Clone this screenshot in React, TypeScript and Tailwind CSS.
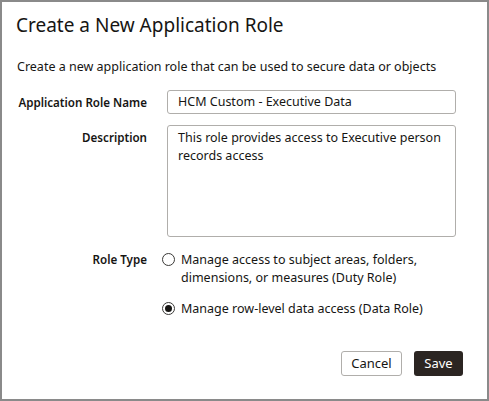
export default function App() {
  return (
    <div className="w-[489px] h-[401px] bg-white border-2 border-[#8a8a8a] text-[#161513] flex flex-col" style={{ fontFamily: '"Noto Sans", "Open Sans", sans-serif' }}>
      <div className="pl-[14px] pt-[10px] text-[19px] leading-[26px]">Create a New Application Role</div>
      <div className="pl-[15px] mt-[20px] text-[12.5px] leading-[18px]">Create a new application role that can be used to secure data or objects</div>
      <div className="grid grid-cols-[145px_1fr] gap-x-[20px] mt-[14px] mr-[31px] text-[12.5px]">
        <div className="text-right font-semibold text-[11.6px] leading-[24px] pt-[1px]">Application Role Name</div>
        <div className="h-[24px] border border-[#b0aeab] rounded-[3px] px-[10px] leading-[22px]">HCM Custom - Executive Data</div>
        <div className="text-right font-semibold text-[11.6px] mt-[11px] leading-[24px]">Description</div>
        <div className="h-[112px] mt-[10px] border border-[#b0aeab] rounded-[3px] px-[10px] pt-[3px] leading-[18px]">This role provides access to Executive person records access</div>
        <div className="text-right font-semibold text-[11.6px] mt-[14px] leading-[18px]">Role Type</div>
        <div className="mt-[14px] flex flex-col gap-[13px] -ml-[5px]">
          <div className="flex gap-[6px] leading-[18px]">
            <span className="mt-[2px] w-[13px] h-[13px] rounded-full border border-[#3a3937] shrink-0" />
            <span>Manage access to subject areas, folders,<br />dimensions, or measures (Duty Role)</span>
          </div>
          <div className="flex gap-[6px] leading-[18px]">
            <span className="mt-[2px] w-[13px] h-[13px] rounded-full border border-[#3a3937] shrink-0 flex items-center justify-center">
              <span className="w-[7px] h-[7px] rounded-full bg-[#161513]" />
            </span>
            <span>Manage row-level data access (Data Role)</span>
          </div>
        </div>
      </div>
      <div className="mt-auto mb-[23px] mr-[24px] flex justify-end gap-[12px] text-[13px]">
        <button className="w-[61px] h-[25px] border border-[#b0aeab] rounded-[3px] bg-white">Cancel</button>
        <button className="w-[49px] h-[25px] rounded-[3px] bg-[#2b2522] text-white">Save</button>
      </div>
    </div>
  );
}
